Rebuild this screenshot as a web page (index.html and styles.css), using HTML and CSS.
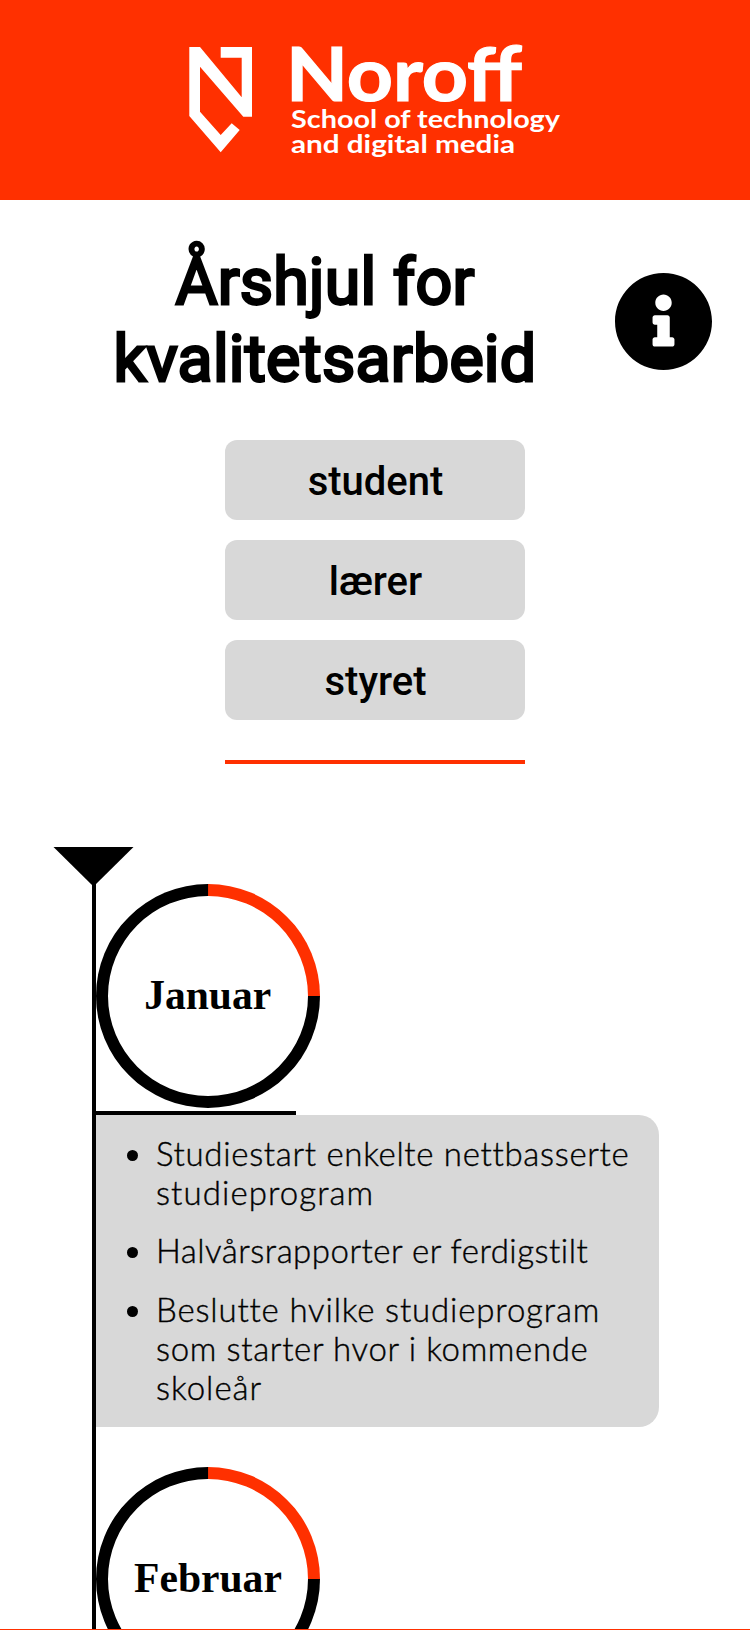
FILE: index.html
```html
<!DOCTYPE html>
<html lang="no">
<head>
<meta charset="utf-8">
<title>Årshjul for kvalitetsarbeid</title>
<link rel="stylesheet" href="styles.css">
</head>
<body>
<div class="page">
  <header class="banner">
    <svg class="logo" viewBox="0 0 380 130" role="img" aria-label="Noroff">
      <path class="mark" d="M4.300 12H15L56.700 62.300V22.700H35.700V12H67V81.700H58.300L15 31.700V76.700L35.700 100L46.700 88.300L54.700 95L35.700 117.300L4.300 81Z"/>
      <text class="brand" x="101" y="66" textLength="236" lengthAdjust="spacingAndGlyphs">Noroff</text>
      <text class="sub" x="106" y="92.700" textLength="269" lengthAdjust="spacingAndGlyphs">School of technology</text>
      <text class="sub" x="106" y="117.700" textLength="224" lengthAdjust="spacingAndGlyphs">and digital media</text>
    </svg>
  </header>
  <div class="heading">
    <h1 class="title">Årshjul for<br>kvalitetsarbeid</h1>
    <svg class="info" viewBox="8 8 496 496"><path d="M256 8C119 8 8 119 8 256s111 248 248 248 248-111 248-248S393 8 256 8zm0 110c23.196 0 42 18.804 42 42s-18.804 42-42 42-42-18.804-42-42 18.804-42 42-42zm56 254c0 6.627-5.373 12-12 12h-88c-6.627 0-12-5.373-12-12v-24c0-6.627 5.373-12 12-12h12v-64h-12c-6.627 0-12-5.373-12-12v-24c0-6.627 5.373-12 12-12h64c6.627 0 12 5.373 12 12v100h12c6.627 0 12 5.373 12 12v24z"/></svg>
  </div>
  <nav class="roles">
    <button class="role">student</button>
    <button class="role">lærer</button>
    <button class="role">styret</button>
  </nav>
  <main class="timeline">
    <div class="arrow"></div>
    <div class="track">
      <section class="month">
        <div class="dial"><h2 class="name">Januar</h2></div>
        <div class="rule"></div>
        <ul class="tasks">
          <li><span class="l1">Studiestart enkelte nettbasserte</span><br><span class="l2">studieprogram</span></li>
          <li><span class="l3">Halvårsrapporter er ferdigstilt</span></li>
          <li><span class="l4">Beslutte hvilke studieprogram</span><br><span class="l5">som starter hvor i kommende</span><br><span class="l6">skoleår</span></li>
        </ul>
      </section>
      <section class="month">
        <div class="dial"><h2 class="name">Februar</h2></div>
      </section>
    </div>
  </main>
  <footer class="edge"></footer>
</div>
</body>
</html>
```
FILE: styles.css
```css
* { box-sizing: border-box; }
body { margin: 0; background: #fff; color: #000; }
.page { display: flex; flex-direction: column; height: 1630px; overflow: hidden; }
.banner { flex: none; height: 200px; padding: 35px 0 0 185px; background: #ff3000; }
.logo { display: block; width: 380px; height: 130px; fill: #fff; overflow: visible; font-family: Lato, sans-serif; }
.brand { font-size: 75px; font-weight: 700; stroke: #fff; stroke-width: 1.2px; }
.sub { font-size: 24.5px; font-weight: 700; }
.heading { flex: none; display: flex; height: 240px; padding-top: 44px; }
.title { width: 650px; margin: 0; text-align: center; font: 400 64.500px/77px Roboto, sans-serif; letter-spacing: 0.25px; -webkit-text-stroke: 2.8px #000; }
.info { flex: none; width: 97px; height: 97px; margin: 29px 0 0 -35px; }
.roles { flex: none; align-self: center; display: flex; flex-direction: column; gap: 20px; width: 300px; height: 324px; border-bottom: 4px solid #ff3000; }
.role { height: 80px; padding: 3px 0 0 1px; border: 0; border-radius: 12px; background: #d8d8d8; color: #000; font: 500 40px/77px Roboto, sans-serif; }
.timeline { flex: 1; min-height: 0; display: flex; flex-direction: column; overflow: hidden; padding: 82.500px 0 0 53px; }
.arrow { flex: none; width: 81px; height: 40px; background: #000; clip-path: polygon(0 0, 100% 0, 50% 100%); }
.track { flex: none; margin: -3px 0 0 39px; border-left: 4px solid #000; }
.month { height: 583px; }
.dial { display: flex; align-items: center; justify-content: center; width: 224px; height: 224px; border: 12px solid #000; border-top-color: #ff3000; border-radius: 50%; transform: rotate(45deg); }
.name { margin: 0; transform: rotate(-45deg) translateY(-0.5px); font: 700 41.600px/48px "Liberation Serif", serif; }
.rule { width: 200px; height: 4px; margin-top: 3px; background: #000; }
.tasks { display: flex; flex-direction: column; gap: 19.500px; width: 562.600px; height: 312px; margin: 0; padding: 19px 0 0 60px; list-style: none; border-radius: 0 20px 20px 0; background: #d8d8d8; font: 300 33px/39px Lato, sans-serif; white-space: nowrap; -webkit-text-stroke: 0.4px #000; }
.tasks li { position: relative; }
.tasks li::before { content: ""; position: absolute; left: -29.500px; top: 16px; width: 11px; height: 11px; border-radius: 50%; background: #000; }
.l1 { letter-spacing: 0.68px; }
.l2 { letter-spacing: 1.08px; }
.l3 { letter-spacing: 0.5px; }
.l4 { letter-spacing: 0.83px; }
.l5 { letter-spacing: 0.65px; }
.l6 { letter-spacing: 1px; }
.edge { flex: none; height: 1px; background: #ff3000; }
```
